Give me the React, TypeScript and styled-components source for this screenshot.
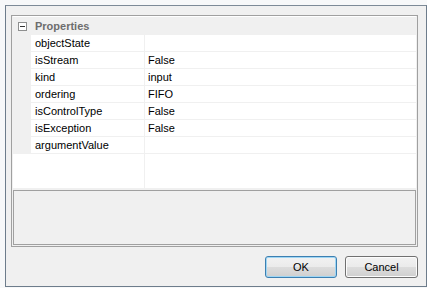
import styled, { createGlobalStyle } from "styled-components";

const GlobalStyle = createGlobalStyle`
  html, body {
    margin: 0;
    padding: 0;
    background: #f7f8f9;
  }
  body {
    font-family: "Liberation Sans", Arial, sans-serif;
    font-size: 11px;
    color: #000;
  }
`;

interface IProperty {
  name: string;
  value: string;
}

const properties: IProperty[] = [
  { name: "objectState", value: "" },
  { name: "isStream", value: "False" },
  { name: "kind", value: "input" },
  { name: "ordering", value: "FIFO" },
  { name: "isControlType", value: "False" },
  { name: "isException", value: "False" },
  { name: "argumentValue", value: "" },
];

export default function App() {
  return (
    <>
      <GlobalStyle />
      <Page>
        <Window>
          <PropertyGrid>
            <PropertyView>
              <CategoryRow>
                <CollapseBox />
                <CategoryName>Properties</CategoryName>
              </CategoryRow>
              {properties.map(({ name, value }) => (
                <PropertyRow key={name}>
                  <Gutter />
                  <NameCell>{name}</NameCell>
                  <ValueCell>{value}</ValueCell>
                </PropertyRow>
              ))}
              <Filler>
                <FillerLeft />
                <div />
              </Filler>
            </PropertyView>
            <DescriptionPane />
          </PropertyGrid>
          <Actions>
            <Button $default style={{ width: 72 }}>
              OK
            </Button>
            <Button style={{ width: 73 }}>Cancel</Button>
          </Actions>
        </Window>
      </Page>
    </>
  );
}

const Page = styled.div`
  padding: 5px 0 1px 5px;
  width: 427px;
  height: 288px;
  box-sizing: border-box;
`;

const Window = styled.div`
  width: 422px;
  height: 282px;
  box-sizing: border-box;
  border: 1px solid #6d7c8b;
  border-top-color: #7d8a97;
  background: #f0f0f0;
  padding: 9px 8px 8px 5px;
  display: flex;
  flex-direction: column;
  gap: 9px;
`;

const PropertyGrid = styled.div`
  height: 232px;
  box-sizing: border-box;
  border: 1px solid #a0a0a0;
  background: #f0f0f0;
  display: flex;
  flex-direction: column;
`;

const PropertyView = styled.div`
  height: 172px;
  margin: 0 1px;
  padding-top: 1px;
  box-sizing: border-box;
  background: #fff;
  display: flex;
  flex-direction: column;
`;

const CategoryRow = styled.div`
  height: 18px;
  background: #f0f0f0;
  display: flex;
  align-items: center;
  padding-left: 5px;
`;

const CollapseBox = styled.span`
  position: relative;
  width: 9px;
  height: 9px;
  box-sizing: border-box;
  border: 1px solid #8e8f8f;
  background: #fff;
  margin-top: 1px;

  &::after {
    content: "";
    position: absolute;
    left: 1px;
    top: 3px;
    width: 5px;
    height: 1px;
    background: #333;
  }
`;

const CategoryName = styled.span`
  margin-left: 8px;
  font-weight: bold;
  color: #6d6d6d;
  line-height: 18px;
`;

const PropertyRow = styled.div`
  display: grid;
  grid-template-columns: 18px 114px 1fr;
  height: 17px;
`;

const Gutter = styled.div`
  background: #f0f0f0;
`;

const NameCell = styled.div`
  padding-left: 4px;
  line-height: 16px;
  border-bottom: 1px solid #f0f0f0;
  border-right: 1px solid #f0f0f0;
  white-space: nowrap;
`;

const ValueCell = styled.div`
  padding-left: 3px;
  line-height: 16px;
  border-bottom: 1px solid #f0f0f0;
  white-space: nowrap;
`;

const Filler = styled.div`
  flex: 1;
  display: grid;
  grid-template-columns: 132px 1fr;
`;

const FillerLeft = styled.div`
  border-right: 1px solid #f0f0f0;
`;

const DescriptionPane = styled.div`
  flex: 1;
  margin: 2px 1px 1px 1px;
  border: 1px solid #a0a0a0;
  background: #f0f0f0;
`;

const Actions = styled.div`
  display: flex;
  justify-content: flex-end;
  gap: 8px;
`;

const Button = styled.button<{ $default?: boolean }>`
  height: 22px;
  box-sizing: border-box;
  padding: 0;
  font-family: "Liberation Sans", Arial, sans-serif;
  font-size: 11px;
  color: #000;
  border-radius: 3px;
  border: 1px solid ${(props) => (props.$default ? "#3c7fb1" : "#707070")};
  background: linear-gradient(
    #f2f2f2 0%,
    #ebebeb 50%,
    #dddddd 50%,
    #cfcfcf 100%
  );
  box-shadow: inset 0 0 0 1px
    ${(props) => (props.$default ? "#9fd6f4" : "#fcfcfc")};
`;
